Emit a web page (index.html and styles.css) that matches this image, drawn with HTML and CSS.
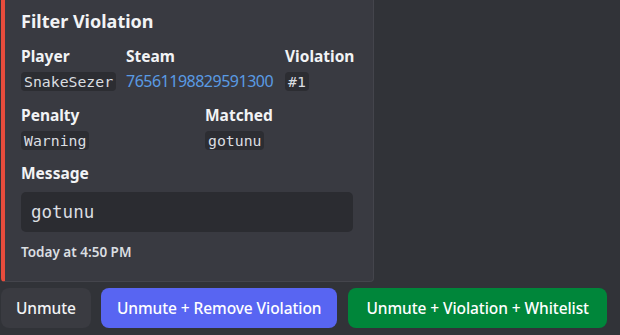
FILE: index.html
```html
<!DOCTYPE html>
<html lang="en">
<head>
    <meta charset="UTF-8">
    <meta name="viewport" content="width=device-width, initial-scale=1.0">
    <title>Filter Violation</title>
    <link rel="stylesheet" href="styles.css">
</head>
<body>

    <!-- Embed -->
    <div class="embed">
        <div class="embed-title">Filter Violation</div>

        <div class="fields fields-three">
            <div class="field">
                <div class="field-name">Player</div>
                <div class="field-value"><code class="inline">SnakeSezer</code></div>
            </div>
            <div class="field">
                <div class="field-name">Steam</div>
                <div class="field-value"><a class="link" href="#">76561198829591300</a></div>
            </div>
            <div class="field">
                <div class="field-name">Violation</div>
                <div class="field-value"><code class="inline">#1</code></div>
            </div>
        </div>

        <div class="fields fields-two">
            <div class="field">
                <div class="field-name">Penalty</div>
                <div class="field-value"><code class="inline">Warning</code></div>
            </div>
            <div class="field">
                <div class="field-name">Matched</div>
                <div class="field-value"><code class="inline">gotunu</code></div>
            </div>
        </div>

        <div class="field field-full">
            <div class="field-name">Message</div>
            <pre class="codeblock">gotunu</pre>
        </div>

        <div class="embed-footer">Today at 4:50 PM</div>
    </div>

    <!-- Buttons -->
    <div class="actions">
        <button class="button button-grey">Unmute</button>
        <button class="button button-blue">Unmute + Remove Violation</button>
        <button class="button button-green">Unmute + Violation + Whitelist</button>
    </div>

</body>
</html>
```

FILE: styles.css
```css
body {
    margin: 0;
    padding-left: 1px;
    background-color: #313338;
    font-family: "Noto Sans", sans-serif;
    color: #dbdee1;
    overflow: hidden;
}
.embed {
    width: 332px;
    margin-top: -10px;
    padding: 19px 20px 20px 16px;
    background-color: #393a41;
    border: 1px solid #44454c;
    border-left: 4px solid #e74c3c;
    border-radius: 4px;
}
.embed-title {
    font-size: 18px;
    line-height: 22px;
    font-weight: 700;
    color: #f2f3f5;
}
.fields {
    display: grid;
    margin-top: 14px;
}
.fields-three {
    grid-template-columns: 105px 159px 1fr;
}
.fields-two {
    grid-template-columns: 184px 1fr;
}
.field-name {
    font-size: 15.5px;
    line-height: 20px;
    font-weight: 700;
    color: #f2f3f5;
}
.field-value {
    margin-top: 6px;
    height: 19px;
    line-height: 19px;
}
.inline {
    display: inline-block;
    height: 19px;
    padding: 0 3px;
    font-family: "DejaVu Sans Mono", monospace;
    font-size: 14.8px;
    line-height: 19px;
    color: #dbdee1;
    background-color: #2c2d32;
    border-radius: 4px;
}
.link {
    font-size: 16px;
    letter-spacing: -0.5px;
    color: #5a9be4;
    text-decoration: none;
}
.field-full {
    margin-top: 13px;
}
.codeblock {
    margin: 9px 0 0;
    height: 40px;
    padding: 0 10px;
    box-sizing: border-box;
    font-family: "DejaVu Sans Mono", monospace;
    font-size: 17.5px;
    line-height: 40px;
    color: #dbdee1;
    background-color: #2b2c31;
    border-radius: 5px;
}
.embed-footer {
    margin-top: 11px;
    font-size: 13.5px;
    line-height: 18px;
    font-weight: 600;
    color: #dbdee1;
}
.actions {
    display: flex;
    gap: 10px;
    margin-top: 6px;
}
.button {
    height: 40px;
    padding: 0 16px;
    border: none;
    border-radius: 8px;
    font-family: "Noto Sans", sans-serif;
    font-size: 15.5px;
    font-weight: 500;
    letter-spacing: -0.08px;
    color: #ffffff;
    cursor: pointer;
}
.button-grey {
    padding: 0 15px;
    background-color: #3a3b41;
    color: #f2f3f5;
}
.button-blue {
    background-color: #5865f2;
}
.button-green {
    margin-left: 1px;
    padding: 0 18px;
    background-color: #00863a;
}
```
